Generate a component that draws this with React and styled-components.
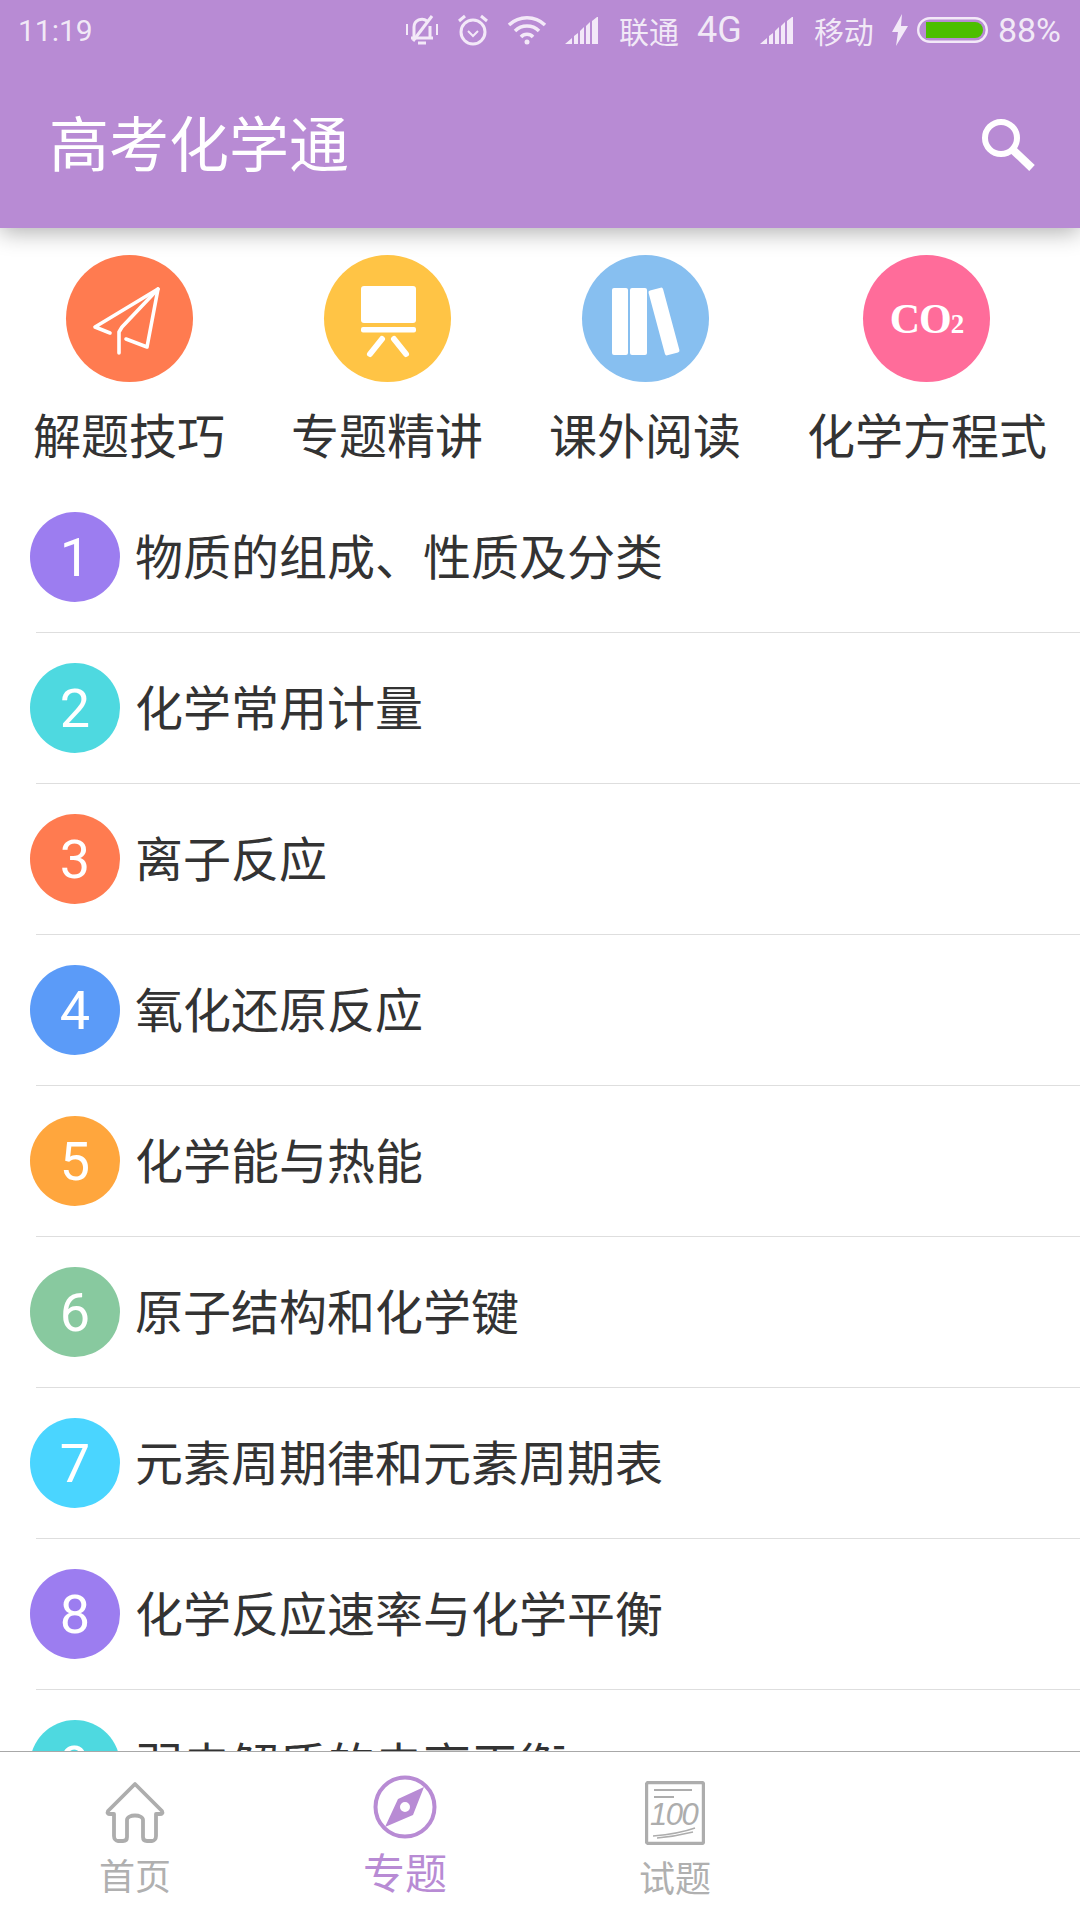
import React from 'react';
import styled, { createGlobalStyle } from 'styled-components';

const PURPLE = '#b88bd4';
const CJK = '"Noto Sans CJK SC", "Noto Sans", sans-serif';

const GlobalStyle = createGlobalStyle`
  html, body {
    margin: 0;
    padding: 0;
    background: #fff;
  }
  * {
    box-sizing: border-box;
  }
`;

const Page = styled.div`
  width: 1080px;
  height: 1920px;
  display: flex;
  flex-direction: column;
  overflow: hidden;
  background: #fff;
  font-family: Roboto, ${CJK};
`;

const Header = styled.header`
  position: relative;
  z-index: 2;
  height: 228px;
  flex: none;
  background: ${PURPLE};
  box-shadow: 0 4px 22px rgba(0, 0, 0, 0.32);
`;

const StatusBar = styled.div`
  height: 60px;
  display: flex;
  align-items: center;
  padding: 0 19px 0 18px;
  color: rgba(255, 255, 255, 0.82);
  font-size: 30px;
`;

const Clock = styled.span`
  margin-right: auto;
`;

const StatusGroup = styled.div`
  display: flex;
  align-items: center;
  gap: 18px;
  font-size: 34px;
`;

const Carrier = styled.span`
  font-family: ${CJK};
  font-size: 30px;
`;

const Network = styled.span`
  font-size: 36px;
`;

const StatusPercent = styled.span`
  margin-left: -8px;
`;

const BatteryWrap = styled.svg`
  margin-left: -9px;
  display: block;
`;

const TitleRow = styled.div`
  height: 168px;
  display: flex;
  align-items: center;
  justify-content: space-between;
  padding: 0 44px 0 49px;
`;

const Title = styled.h1`
  margin: 0;
  font-family: ${CJK};
  font-weight: 400;
  font-size: 60px;
  line-height: 1;
  color: #fff;
  position: relative;
  top: -3px;
`;

const Shortcuts = styled.nav`
  height: 254px;
  flex: none;
  display: flex;
  justify-content: space-around;
  padding-top: 27px;
`;

const Shortcut = styled.div`
  display: flex;
  flex-direction: column;
  align-items: center;
`;

const ShortcutCircle = styled.div`
  width: 127px;
  height: 127px;
  border-radius: 50%;
  background: ${(p) => p.$bg};
  display: flex;
  align-items: center;
  justify-content: center;
  color: #fff;
  position: relative;
  left: 1px;
  ${Shortcut}:last-child & {
    left: 0;
  }
`;

const ShortcutLabel = styled.span`
  margin-top: 16px;
  font-family: ${CJK};
  font-size: 48px;
  line-height: 70px;
  color: #333;
  white-space: nowrap;
`;

const Co2 = styled.span`
  font-family: "Liberation Serif", serif;
  font-weight: 700;
  font-size: 42px;
  letter-spacing: -1px;
  sub {
    font-size: 27px;
    vertical-align: baseline;
    letter-spacing: 0;
  }
`;

const List = styled.div`
  flex: 1;
  overflow: hidden;
`;

const Row = styled.div`
  position: relative;
  height: 151px;
  display: flex;
  align-items: flex-start;
  padding: 30px 0 0 30px;
  &::after {
    content: '';
    position: absolute;
    left: 36px;
    right: 0;
    bottom: 0;
    height: 1px;
    background: #dedede;
  }
`;

const Num = styled.div`
  width: 90px;
  height: 90px;
  flex: none;
  border-radius: 50%;
  background: ${(p) => p.$bg};
  color: #fff;
  font-size: 54px;
  display: flex;
  align-items: center;
  justify-content: center;
  font-weight: 400;
`;

const RowText = styled.span`
  margin-left: 15px;
  margin-top: -3px;
  font-family: ${CJK};
  font-size: 48px;
  line-height: 90px;
  color: #333;
`;

const TabBar = styled.footer`
  height: 169px;
  flex: none;
  display: grid;
  grid-template-columns: repeat(4, 270px);
  background: #fff;
  border-top: 1px solid #a8a8a8;
  position: relative;
  z-index: 1;
`;

const Tab = styled.div`
  display: flex;
  flex-direction: column;
  align-items: center;
  padding-top: ${(p) => (p.$active ? 23 : 29)}px;
  color: ${(p) => (p.$active ? PURPLE : '#b0b0b0')};
`;

const TabLabel = styled.span`
  font-family: ${CJK};
  font-size: ${(p) => (p.$active ? 42 : 36)}px;
  line-height: 50px;
  margin-top: ${(p) => (p.$active ? 7 : 6)}px;
`;

const ICON = { display: 'block' };

const MuteBell = () => (
  <svg width="34" height="34" viewBox="0 0 34 34" fill="none" stroke="#f3e9f8" strokeWidth="3" style={ICON}>
    <path d="M9 24V14a8 8 0 0 1 13-6M25 13v11M6 25h22M13 30h8" />
    <path d="M27 3L8 28" />
    <path d="M2 11v11M32 11v11" strokeWidth="2" />
  </svg>
);

const Alarm = () => (
  <svg width="32" height="34" viewBox="0 0 32 34" fill="none" stroke="#f3e9f8" strokeWidth="3" style={ICON}>
    <circle cx="16" cy="19" r="12" />
    <path d="M11 18l5 5 5-5" strokeWidth="2" />
    <path d="M2 8l6-5M30 8l-6-5" />
  </svg>
);

const Wifi = () => (
  <svg width="40" height="32" viewBox="0 0 40 32" fill="none" stroke="#f3e9f8" strokeWidth="3.5" style={ICON}>
    <path d="M2 11a26 26 0 0 1 36 0M8 17a17 17 0 0 1 24 0M14 23a8 8 0 0 1 12 0" />
    <circle cx="20" cy="28" r="2.5" fill="#f3e9f8" stroke="none" />
  </svg>
);

const Signal = () => (
  <svg width="36" height="28" viewBox="0 0 36 28" fill="#f3e9f8" style={ICON}>
    <path d="M0 28l7-6v6zM9 20l4-3v11H9zM15 15l4-4v17h-4zM21 10l4-4v22h-4zM27 5l5-4h1v27h-6z" />
  </svg>
);

const Bolt = () => (
  <svg width="16" height="32" viewBox="0 0 16 32" fill="#f3e9f8" style={ICON}>
    <path d="M10 0L0 18h6l-2 14L16 12H9z" />
  </svg>
);

const Battery = () => (
  <BatteryWrap width="71" height="26" viewBox="0 0 71 26">
    <rect x="1.2" y="1.2" width="68.6" height="23.6" rx="11.8" fill="none" stroke="#f3e9f8" strokeWidth="2.4" />
    <path d="M9 5h49a8 8 0 0 1 0 16H9z" fill="#4cbf00" />
  </BatteryWrap>
);

const SearchIcon = () => (
  <svg width="56" height="54" viewBox="0 0 56 54" fill="none" stroke="#fff" style={ICON}>
    <circle cx="21" cy="21" r="16" strokeWidth="6" />
    <path d="M33 33l19 18" strokeWidth="8" />
  </svg>
);

const PlaneIcon = () => (
  <svg width="127" height="127" viewBox="0 0 127 127" fill="none" stroke="#fff" strokeWidth="3.6" strokeLinejoin="round" strokeLinecap="round" style={ICON}>
    <path d="M60 84l21 8 11-58-63 38 15 6" />
    <path d="M92 34L56 72l-3 5v21" />
  </svg>
);

const BoardIcon = () => (
  <svg width="127" height="127" viewBox="0 0 127 127" fill="#fff" style={ICON}>
    <rect x="37" y="31" width="55" height="37" rx="3" />
    <rect x="37" y="72" width="55" height="5.5" rx="2" />
    <path d="M58 84L46 99M70 84l12 15" stroke="#fff" strokeWidth="6" strokeLinecap="round" />
  </svg>
);

const BooksIcon = () => (
  <svg width="127" height="127" viewBox="0 0 127 127" fill="#fff" style={ICON}>
    <rect x="30" y="33" width="16" height="67" rx="2" />
    <rect x="48" y="33" width="17" height="67" rx="2" />
    <rect x="74.5" y="33" width="15" height="67" rx="2" transform="rotate(-15 82 66.5)" />
  </svg>
);

const HomeIcon = () => (
  <svg width="60" height="62" viewBox="0 0 60 62" fill="none" stroke="#adadad" strokeWidth="3.8" strokeLinejoin="round" style={ICON}>
    <path d="M30 3L3 30c-1 2 0 3 2 3h4v22c0 3 2 5 4 5h5c3 0 4-2 4-4V39c0-6 16-6 16 0v17c0 2 1 4 4 4h5c2 0 4-2 4-5V33h4c2 0 3-1 2-3z" />
  </svg>
);

const CompassIcon = () => (
  <svg width="64" height="64" viewBox="0 0 64 64" fill="none" style={ICON}>
    <circle cx="32" cy="32" r="29.5" stroke={PURPLE} strokeWidth="4" />
    <path fillRule="evenodd" fill={PURPLE} d="M51 12L40 40 12 52l13-28zM32 27a5 5 0 1 0 0 10 5 5 0 0 0 0-10z" />
  </svg>
);

const PaperIcon = () => (
  <svg width="60" height="64" viewBox="0 0 60 64" fill="none" stroke="#adadad" style={ICON}>
    <rect x="1.5" y="1.5" width="57" height="61" rx="2" strokeWidth="3.4" />
    <path d="M9 9h38M9 16h20" strokeWidth="2.2" />
    <text x="5" y="44" fontFamily="Liberation Sans, sans-serif" fontStyle="italic" fontSize="31" letterSpacing="-1.5" fill="#adadad" stroke="none">100</text>
    <path d="M8 55c12-1 28-3 42-8M12 57c12-1 24-3 36-6" strokeWidth="1.5" />
  </svg>
);

const SHORTCUTS = [
  { label: '解题技巧', bg: '#ff7b50', icon: <PlaneIcon /> },
  { label: '专题精讲', bg: '#ffc445', icon: <BoardIcon /> },
  { label: '课外阅读', bg: '#87bff0', icon: <BooksIcon /> },
  { label: '化学方程式', bg: '#ff6c9a', icon: <Co2>CO<sub>2</sub></Co2> },
];

const TOPICS = [
  { text: '物质的组成、性质及分类', bg: '#9c7df0' },
  { text: '化学常用计量', bg: '#4ed9e0' },
  { text: '离子反应', bg: '#ff7b50' },
  { text: '氧化还原反应', bg: '#5b9bf8' },
  { text: '化学能与热能', bg: '#ffa63d' },
  { text: '原子结构和化学键', bg: '#88c99f' },
  { text: '元素周期律和元素周期表', bg: '#4ad5ff' },
  { text: '化学反应速率与化学平衡', bg: '#9c7df0' },
  { text: '弱电解质的电离平衡', bg: '#4ed9e0' },
];

const App = () => (
  <>
    <GlobalStyle />
    <Page>
      <Header>
        <StatusBar>
          <Clock>11:19</Clock>
          <StatusGroup>
            <MuteBell />
            <Alarm />
            <Wifi />
            <Signal />
            <Carrier>联通</Carrier>
            <Network>4G</Network>
            <Signal />
            <Carrier>移动</Carrier>
            <Bolt />
            <Battery />
            <StatusPercent>88%</StatusPercent>
          </StatusGroup>
        </StatusBar>
        <TitleRow>
          <Title>高考化学通</Title>
          <SearchIcon />
        </TitleRow>
      </Header>

      <Shortcuts>
        {SHORTCUTS.map((s) => (
          <Shortcut key={s.label}>
            <ShortcutCircle $bg={s.bg}>{s.icon}</ShortcutCircle>
            <ShortcutLabel>{s.label}</ShortcutLabel>
          </Shortcut>
        ))}
      </Shortcuts>

      <List>
        {TOPICS.map((t, i) => (
          <Row key={t.text}>
            <Num $bg={t.bg}>{i + 1}</Num>
            <RowText>{t.text}</RowText>
          </Row>
        ))}
      </List>

      <TabBar>
        <Tab>
          <HomeIcon />
          <TabLabel>首页</TabLabel>
        </Tab>
        <Tab $active>
          <CompassIcon />
          <TabLabel $active>专题</TabLabel>
        </Tab>
        <Tab>
          <PaperIcon />
          <TabLabel>试题</TabLabel>
        </Tab>
      </TabBar>
    </Page>
  </>
);

export default App;
